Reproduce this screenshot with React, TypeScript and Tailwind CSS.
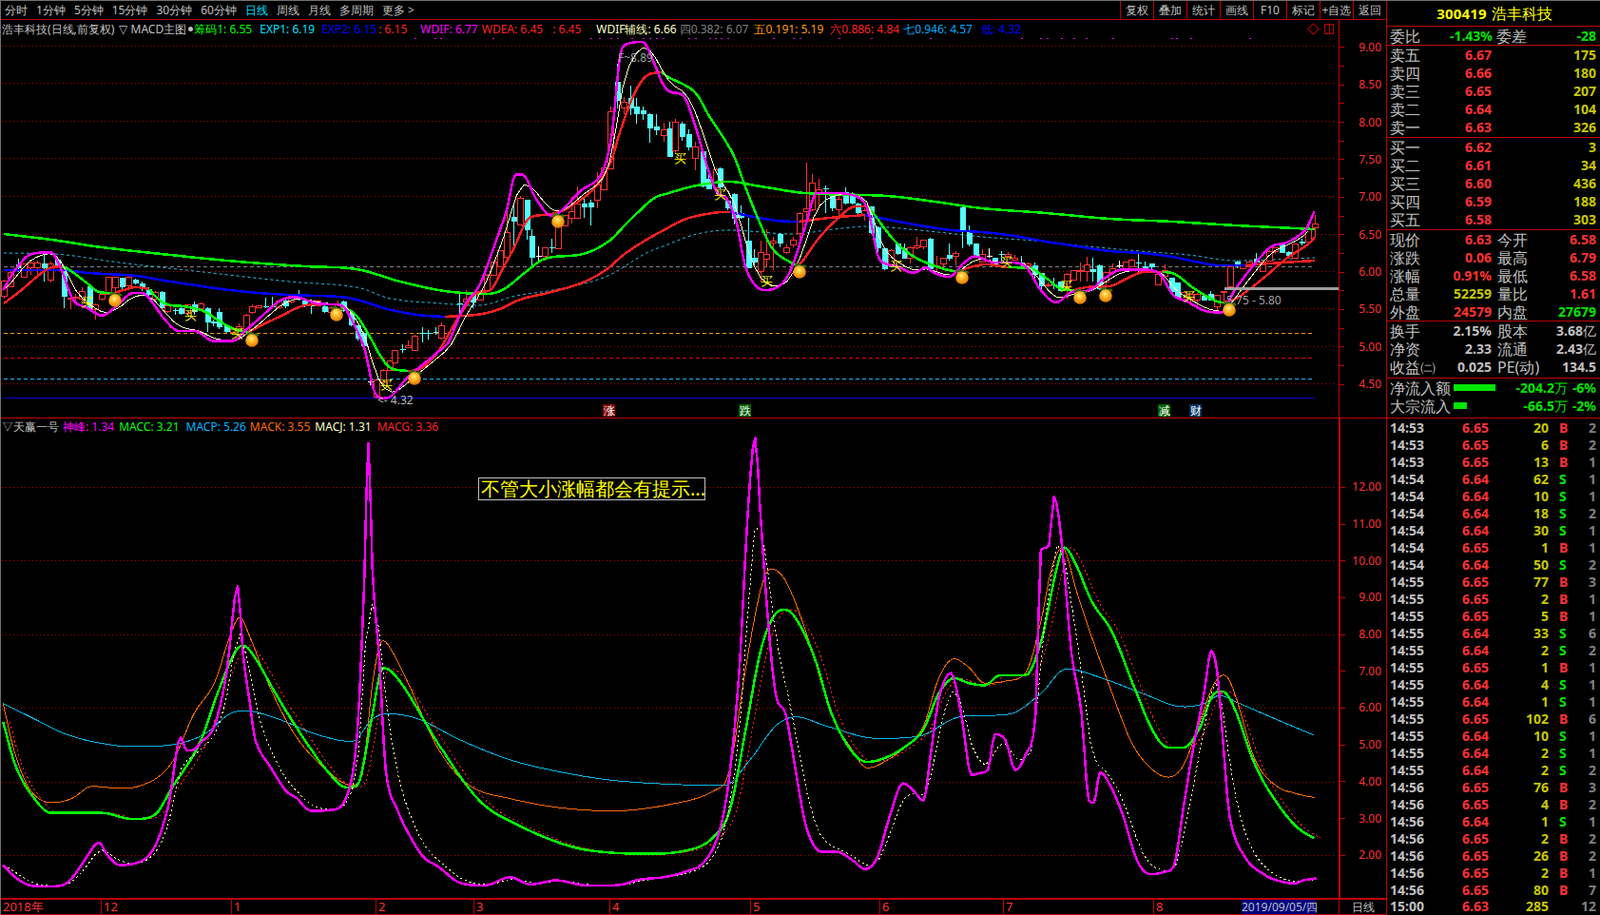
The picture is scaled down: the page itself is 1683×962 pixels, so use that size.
import React from "react";

type P = [number, number];
const K = 1683 / 1568;
const KY = 962 / 896;
const disp = (a: number[][]): P[] => a.map(([x, y]) => [x * K, y * KY]);
const str = (p: P[]) => p.map(([x, y]) => `${x.toFixed(1)},${y.toFixed(1)}`).join(" ");

function smooth(p: P[], step = 3): P[] {
  const n = p.length;
  if (n < 3) return p;
  const m: number[] = p.map((_, i) => {
    if (i === 0 || i === n - 1) return 0;
    const d0 = (p[i][1] - p[i - 1][1]) / (p[i][0] - p[i - 1][0] || 1);
    const d1 = (p[i + 1][1] - p[i][1]) / (p[i + 1][0] - p[i][0] || 1);
    if (d0 * d1 <= 0) return 0;
    const s = (p[i + 1][1] - p[i - 1][1]) / (p[i + 1][0] - p[i - 1][0] || 1);
    const lim = 3 * Math.min(Math.abs(d0), Math.abs(d1));
    return Math.sign(s) * Math.min(Math.abs(s), lim);
  });
  m[0] = (p[1][1] - p[0][1]) / (p[1][0] - p[0][0] || 1);
  m[n - 1] = (p[n - 1][1] - p[n - 2][1]) / (p[n - 1][0] - p[n - 2][0] || 1);
  const out: P[] = [];
  for (let i = 0; i < n - 1; i++) {
    const [x0, y0] = p[i];
    const [x1, y1] = p[i + 1];
    const h = x1 - x0 || 1;
    const segs = Math.max(1, Math.ceil(h / step));
    for (let s = 0; s < segs; s++) {
      const t = s / segs;
      const t2 = t * t;
      const t3 = t2 * t;
      const y = (2 * t3 - 3 * t2 + 1) * y0 + (t3 - 2 * t2 + t) * h * m[i] + (-2 * t3 + 3 * t2) * y1 + (t3 - t2) * h * m[i + 1];
      out.push([x0 + h * t, y]);
    }
  }
  out.push(p[n - 1]);
  return out;
}

function ema(p: P[], alpha: number, step = 6.933): P[] {
  const out: P[] = [];
  let j = 0;
  let v = p[0][1];
  for (let x = p[0][0]; x <= p[p.length - 1][0]; x += step) {
    while (j < p.length - 2 && p[j + 1][0] < x) j++;
    const [x0, y0] = p[j];
    const [x1, y1] = p[j + 1];
    const y = y0 + ((y1 - y0) * (x - x0)) / (x1 - x0 || 1);
    v = v + (y - v) * alpha;
    out.push([x, v]);
  }
  return out;
}

const RED = "#ff2020";
const GRN = "#00ff00";
const BLU = "#0000ff";

/* ---------- upper chart lines (page px) ---------- */
const exp1: [string, P[]][] = [
  [RED, [[4, 320], [20, 308], [40, 291], [54, 282], [65, 281]]],
  [GRN, [[65, 281], [72, 284], [92, 299], [104, 308], [114, 309], [118, 310]]],
  [RED, [[118, 310], [130, 306], [143, 303], [157, 305]]],
  [GRN, [[157, 305], [168, 317], [180, 322], [193, 323], [214, 328], [230, 338], [246, 347], [261, 350]]],
  [RED, [[261, 350], [271, 345], [296, 333], [321, 322], [340, 321], [357, 321]]],
  [GRN, [[357, 321], [375, 333], [389, 355], [400, 375], [411, 388], [429, 391]]],
  [RED, [[429, 391], [439, 390], [460, 372], [479, 340], [500, 310], [517, 305], [529, 283], [540, 263], [557, 230], [580, 226], [597, 220], [627, 197], [643, 170], [652, 140], [667, 100], [681, 80], [696, 77]]],
  [GRN, [[696, 77], [703, 82], [731, 98], [746, 123], [771, 163], [785, 200], [797, 230], [813, 263], [837, 280]]],
  [RED, [[837, 280], [843, 277], [860, 253], [880, 232], [900, 218], [913, 218]]],
  [GRN, [[913, 218], [920, 227], [940, 253], [960, 270], [987, 282], [1007, 287]]],
  [RED, [[1007, 287], [1017, 283], [1037, 279], [1060, 282]]],
  [GRN, [[1060, 282], [1083, 283], [1100, 293], [1117, 305], [1130, 306]]],
  [RED, [[1130, 306], [1143, 303], [1167, 302], [1187, 293], [1203, 287], [1223, 287]]],
  [GRN, [[1223, 287], [1233, 288], [1257, 305], [1280, 318], [1287, 319]]],
  [RED, [[1287, 319], [1300, 315], [1327, 295], [1353, 273], [1377, 257], [1383, 250]]],
];
const exp2: [string, P[]][] = [
  [BLU, [[4, 285], [64, 285], [93, 288], [143, 291], [179, 297], [250, 307], [304, 311], [357, 313], [379, 317], [404, 325], [439, 332], [468, 334]]],
  [RED, [[468, 334], [500, 332], [523, 327], [547, 316], [580, 308], [613, 298], [637, 285], [657, 268], [680, 253], [700, 242], [717, 233], [733, 228], [763, 224], [768, 224]]],
  [BLU, [[768, 224], [783, 227], [817, 233], [840, 234]]],
  [RED, [[840, 234], [873, 230], [910, 227]]],
  [BLU, [[910, 227], [940, 233], [967, 238], [1000, 243], [1033, 245], [1067, 249], [1100, 255], [1133, 260], [1167, 265], [1200, 267], [1233, 271], [1267, 278], [1283, 280], [1310, 280]]],
  [RED, [[1310, 280], [1350, 277], [1383, 275]]],
];
const longGreen: P[] = [[4, 247], [54, 253], [107, 261], [179, 269], [250, 276], [321, 281], [375, 284], [421, 297], [468, 307], [513, 310], [530, 305], [553, 287], [573, 273], [613, 268], [640, 255], [660, 235], [687, 210], [700, 205], [733, 196], [767, 192], [800, 197], [847, 204], [933, 207], [983, 213], [1033, 220], [1100, 225], [1167, 231], [1233, 234], [1300, 238], [1383, 242]];
const cyanDash: P[] = [[4, 267], [57, 268], [125, 277], [214, 287], [304, 297], [375, 303], [411, 315], [464, 320], [503, 322], [543, 312], [587, 305], [637, 292], [680, 267], [700, 259], [733, 247], [767, 243], [833, 247], [877, 242], [913, 239], [967, 243], [1033, 250], [1100, 255], [1133, 259], [1200, 265], [1250, 269], [1300, 275], [1383, 272]];
const wdif: P[] = smooth(disp([[3, 285], [15, 265], [30, 250], [50, 248], [60, 265], [72, 295], [85, 302], [100, 310], [115, 300], [130, 288], [140, 288], [150, 298], [160, 312], [175, 325], [190, 325], [210, 335], [228, 335], [240, 325], [255, 312], [275, 295], [290, 292], [310, 298], [335, 300], [345, 315], [358, 345], [366, 382], [375, 391], [383, 389], [400, 370], [430, 345], [440, 335], [455, 300], [470, 280], [485, 240], [497, 205], [505, 172], [512, 172], [525, 195], [540, 212], [570, 187], [590, 170], [600, 130], [607, 60], [612, 45], [630, 42], [640, 60], [648, 80], [655, 90], [670, 95], [680, 120], [695, 170], [703, 190], [712, 195], [722, 220], [730, 260], [740, 280], [750, 285], [765, 280], [775, 265], [790, 220], [800, 190], [815, 190], [835, 192], [850, 205], [862, 255], [880, 262], [895, 268], [908, 263], [915, 268], [930, 272], [945, 258], [955, 252], [975, 258], [990, 258], [1005, 262], [1020, 285], [1035, 297], [1050, 287], [1068, 285], [1080, 275], [1100, 265], [1120, 265], [1135, 268], [1150, 290], [1165, 297], [1180, 305], [1197, 307], [1210, 285], [1225, 265], [1245, 243], [1262, 238], [1280, 225], [1288, 208]]));

/* ---------- candles: [zoomX, kind, high, top, bottom, low] ---------- */
type C = [number, string, number, number, number, number];
const mapC = (a: C[], ox: number, sx: number, oy: number) =>
  a.map(([x, k, h, t, b, l]) => ({ x: ox + x / sx, k, h: oy + h / 3, t: oy + t / 3, b: oy + b / 3, l: oy + l / 3 }));
const candles = [
  ...mapC([
    [12, "r", 285, 290, 338, 345], [32, "r", 255, 262, 308, 308], [52, "c", 218, 238, 250, 262], [71, "r", 235, 236, 278, 280],
    [90, "r", 228, 232, 246, 270], [108, "r", 225, 233, 246, 272], [128, "c", 205, 235, 250, 292], [147, "r", 228, 235, 285, 295],
    [167, "c", 215, 222, 240, 250], [187, "c", 245, 255, 340, 375], [206, "r", 335, 342, 346, 378], [222, "r", 330, 340, 344, 350],
    [242, "r", 310, 322, 345, 360], [262, "c", 300, 305, 380, 382], [281, "r", 360, 365, 380, 410], [300, "r", 320, 332, 346, 352],
    [320, "r", 277, 277, 330, 332], [340, "r", 275, 277, 310, 320], [358, "c", 278, 280, 310, 325], [377, "r", 276, 278, 305, 310],
    [397, "c", 282, 286, 296, 300], [416, "c", 292, 296, 316, 320], [436, "c", 310, 315, 332, 342], [455, "r", 320, 326, 346, 350],
    [475, "c", 322, 325, 375, 378], [494, "r", 365, 368, 386, 390], [514, "c", 375, 380, 383, 395], [533, "c", 370, 375, 392, 396],
    [552, "r", 362, 365, 392, 396], [570, "c", 355, 362, 388, 396], [590, "r", 358, 362, 376, 380], [609, "c", 372, 375, 420, 450],
    [628, "c", 410, 416, 424, 432], [645, "c", 375, 386, 436, 440], [665, "c", 428, 430, 450, 452], [685, "r", 436, 441, 450, 456],
    [704, "r", 424, 432, 456, 460], [724, "r", 394, 396, 456, 458], [743, "r", 364, 370, 388, 392], [762, "r", 366, 368, 372, 374],
    [781, "c", 342, 368, 373, 375], [800, "c", 340, 368, 373, 375], [820, "r", 350, 352, 373, 376], [840, "c", 340, 350, 368, 376],
    [858, "r", 333, 337, 356, 360], [878, "c", 318, 340, 348, 352], [897, "c", 348, 352, 365, 372], [916, "c", 360, 366, 370, 392],
    [935, "r", 348, 352, 366, 370], [955, "c", 366, 370, 386, 390], [974, "r", 368, 372, 388, 390], [994, "r", 350, 360, 376, 380],
    [1012, "c", 352, 355, 385, 388], [1032, "c", 388, 390, 430, 432], [1052, "c", 428, 430, 470, 476], [1070, "c", 450, 452, 496, 498],
    [1089, "w", 596, 605, 607, 618], [1108, "r", 600, 602, 656, 660], [1128, "r", 568, 570, 606, 610], [1147, "r", 538, 540, 570, 572],
    [1163, "r", 506, 508, 546, 548], [1183, "c", 490, 505, 507, 516], [1202, "r", 476, 492, 500, 502], [1222, "r", 460, 463, 508, 510],
    [1242, "c", 435, 452, 455, 482], [1261, "c", 444, 452, 455, 474], [1281, "c", 435, 449, 452, 460], [1300, "r", 420, 431, 470, 474],
  ], 0, 2.8, 200),
  ...mapC([
    [10, "c", 510, 540, 543, 575], [31, "r", 498, 526, 534, 545], [52, "c", 505, 514, 536, 556], [74, "r", 500, 506, 528, 530],
    [95, "r", 448, 450, 500, 502], [116, "r", 408, 410, 450, 452], [137, "r", 371, 373, 423, 425], [158, "r", 228, 315, 395, 405],
    [179, "c", 230, 268, 282, 375], [200, "r", 200, 208, 293, 295], [221, "c", 212, 213, 310, 340], [238, "c", 305, 328, 395, 425],
    [259, "w", 360, 390, 392, 415], [280, "r", 362, 364, 390, 404], [301, "c", 335, 363, 366, 380], [322, "r", 293, 295, 368, 370],
    [343, "r", 260, 262, 296, 298], [364, "r", 205, 250, 270, 288], [382, "r", 170, 225, 272, 274], [403, "c", 210, 225, 237, 270],
    [424, "c", 213, 222, 237, 293], [445, "r", 125, 165, 215, 240], [466, "r", 100, 112, 180, 182],
  ], 480, 3, 140),
  ...mapC([
    [230, "r", 340, 355, 535, 537], [250, "c", 205, 262, 320, 345], [268, "r", 310, 325, 342, 362], [287, "c", 273, 312, 345, 365],
    [306, "c", 312, 340, 362, 392], [325, "c", 340, 351, 363, 380], [345, "c", 360, 363, 407, 452], [365, "c", 364, 402, 414, 430],
    [385, "r", 390, 412, 431, 450], [402, "c", 388, 408, 497, 499], [420, "r", 378, 388, 478, 490], [440, "c", 388, 394, 434, 448],
    [460, "c", 410, 426, 468, 478], [480, "r", 450, 466, 502, 540], [500, "c", 478, 480, 590, 595], [519, "c", 555, 568, 600, 600],
    [539, "r", 530, 538, 594, 598],
  ], 560, 2.8, 0),
  ...mapC([
    [172, "c", 232, 234, 294, 300], [196, "c", 330, 335, 360, 365], [217, "c", 312, 315, 393, 410], [238, "c", 350, 375, 390, 392],
    [260, "c", 390, 462, 548, 550], [280, "c", 490, 515, 530, 545], [301, "r", 462, 500, 560, 590], [319, "r", 425, 505, 521, 545],
    [340, "r", 450, 463, 470, 555], [361, "c", 438, 440, 472, 483], [382, "r", 473, 485, 498, 503], [403, "r", 450, 460, 476, 482],
    [424, "r", 372, 377, 438, 458], [445, "r", 216, 362, 370, 388], [463, "r", 252, 280, 365, 368], [484, "r", 267, 300, 312, 360],
    [505, "c", 288, 297, 300, 375], [526, "c", 315, 322, 360, 370], [547, "r", 312, 330, 365, 385], [568, "c", 295, 310, 345, 348],
    [589, "c", 310, 320, 345, 348], [607, "c", 343, 345, 375, 385], [628, "r", 360, 368, 382, 398], [649, "c", 353, 355, 438, 440],
    [670, "c", 418, 420, 487, 505], [691, "c", 483, 485, 552, 554], [712, "r", 490, 492, 540, 542], [733, "c", 468, 470, 505, 507],
    [752, "c", 470, 487, 518, 520], [772, "r", 481, 483, 518, 535], [793, "r", 450, 478, 485, 490], [814, "r", 458, 460, 480, 490],
    [835, "c", 454, 456, 552, 554], [856, "r", 510, 540, 545, 560], [877, "r", 515, 517, 535, 545], [895, "c", 470, 507, 520, 525],
    [916, "r", 495, 503, 512, 540], [937, "c", 356, 358, 432, 485], [958, "c", 415, 432, 473, 480], [979, "c", 470, 472, 510, 512],
    [1000, "r", 490, 505, 530, 532], [1020, "w", 487, 509, 511, 517], [1039, "c", 515, 517, 540, 542], [1060, "c", 495, 505, 507, 530],
    [1081, "r", 498, 505, 510, 517], [1102, "r", 507, 517, 523, 525], [1123, "c", 510, 530, 532, 545], [1144, "r", 530, 535, 542, 545],
    [1165, "c", 530, 540, 570, 585], [1186, "c", 563, 565, 605, 620],
  ], 700, 3, 100),
  ...mapC([
    [5, "r", 295, 300, 303, 310], [25, "c", 280, 300, 302, 315], [46, "c", 290, 292, 320, 322], [67, "r", 265, 267, 310, 345],
    [88, "r", 255, 257, 285, 287], [109, "r", 230, 255, 260, 290], [128, "r", 212, 237, 260, 290], [148, "c", 215, 252, 262, 290],
    [169, "c", 238, 240, 315, 317], [190, "r", 260, 262, 292, 310], [211, "r", 235, 250, 263, 270], [232, "w", 225, 240, 242, 250],
    [253, "r", 228, 230, 250, 252], [271, "r", 220, 222, 245, 247], [292, "c", 200, 230, 235, 260], [313, "c", 228, 242, 248, 252],
    [334, "c", 233, 235, 247, 260], [355, "r", 265, 267, 302, 304], [376, "r", 238, 255, 275, 277], [397, "c", 278, 280, 325, 327],
    [415, "c", 293, 295, 345, 347], [436, "r", 323, 325, 345, 347], [457, "r", 328, 330, 345, 365], [478, "r", 328, 330, 348, 370],
    [499, "c", 333, 335, 350, 352], [520, "c", 320, 330, 350, 352], [541, "r", 333, 335, 370, 385], [560, "r", 320, 321, 322, 360],
    [581, "r", 243, 245, 308, 310], [602, "c", 226, 228, 238, 248], [622, "r", 238, 240, 250, 252], [643, "r", 226, 228, 245, 247],
    [664, "c", 200, 218, 232, 234], [685, "r", 226, 228, 258, 260], [706, "r", 193, 195, 225, 227], [724, "r", 183, 185, 195, 205],
    [745, "c", 173, 175, 200, 202], [766, "c", 196, 198, 210, 212], [787, "r", 170, 172, 218, 220], [808, "c", 155, 165, 172, 178],
    [829, "r", 123, 125, 165, 167], [848, "r", 80, 110, 122, 150],
  ], 1100, 3, 200),
];

const buys: P[] = [[91, 318], [200, 332], [249, 351], [406, 405], [715, 167], [757, 205], [806, 296], [942, 280], [1058, 276], [1121, 301], [1250, 312]];
const balls: P[] = [[121, 317], [265, 359], [354, 332], [436, 399], [587, 234], [841, 287], [1012, 293], [1136, 314], [1163, 312], [1293, 327]];
const dots = [
  ...[1220, 1280, 1296, 1450].map((z) => z / 2.8),
  ...[172, 197, 230, 250, 290, 325, 345, 365, 383, 460, 480, 520, 537, 555, 573, 708, 768, 787, 902, 997, 1170, 1440, 1495, 1515, 1557].map((z) => 560 + z / 2.8),
  ...[25, 60, 138, 312, 327, 368, 540].map((z) => 1120 + z / 2.785),
];

/* ---------- lower chart lines ---------- */
const shen = smooth(disp([[3, 848], [15, 860], [30, 868], [50, 869], [65, 866], [75, 855], [85, 840], [97, 826], [105, 838], [117, 848], [130, 847], [150, 833], [165, 790], [177, 723], [183, 736], [190, 735], [197, 728], [210, 712], [222, 660], [233, 575], [238, 640], [245, 690], [250, 725], [265, 752], [280, 775], [290, 782], [305, 795], [325, 794], [340, 780], [350, 720], [357, 570], [361, 435], [365, 560], [372, 650], [378, 755], [390, 795], [402, 820], [415, 840], [430, 850], [450, 865], [475, 868], [500, 860], [520, 867], [545, 863], [575, 868], [595, 868], [610, 867], [628, 862], [650, 860], [670, 855], [690, 845], [705, 815], [715, 760], [725, 650], [733, 500], [740, 430], [745, 500], [752, 600], [760, 680], [770, 700], [778, 745], [790, 810], [805, 835], [820, 835], [835, 843], [848, 852], [860, 840], [872, 800], [885, 768], [895, 775], [905, 785], [912, 740], [920, 685], [932, 660], [942, 700], [952, 760], [960, 758], [968, 755], [975, 720], [985, 725], [995, 755], [1005, 740], [1015, 700], [1020, 540], [1028, 535], [1033, 487], [1038, 510], [1043, 560], [1050, 640], [1060, 700], [1067, 785], [1072, 787], [1078, 757], [1088, 770], [1100, 798], [1115, 845], [1128, 857], [1140, 855], [1150, 850], [1160, 790], [1170, 730], [1180, 680], [1187, 638], [1193, 660], [1198, 720], [1205, 800], [1220, 840], [1240, 858], [1255, 864], [1270, 866], [1277, 863], [1290, 861]]));
const macc = smooth(disp([[3, 708], [15, 750], [30, 778], [50, 797], [70, 797], [100, 797], [130, 803], [150, 800], [170, 770], [195, 730], [215, 675], [230, 640], [238, 633], [250, 645], [270, 680], [295, 720], [320, 755], [340, 772], [350, 770], [365, 700], [375, 655], [385, 660], [400, 680], [430, 730], [470, 785], [510, 810], [560, 830], [600, 836], [640, 837], [680, 832], [700, 820], [715, 795], [730, 720], [745, 640], [760, 602], [770, 598], [785, 615], [800, 650], [815, 700], [835, 737], [850, 747], [870, 742], [890, 730], [905, 715], [920, 680], [935, 665], [950, 670], [965, 672], [980, 662], [1005, 662], [1020, 630], [1035, 560], [1043, 537], [1055, 555], [1070, 590], [1090, 620], [1110, 670], [1130, 717], [1145, 733], [1160, 733], [1175, 715], [1190, 680], [1198, 678], [1210, 695], [1230, 750], [1250, 785], [1270, 810], [1288, 822]]));
const mack = smooth(disp([[3, 690], [15, 740], [30, 775], [50, 787], [70, 783], [90, 771], [120, 773], [150, 765], [170, 745], [190, 700], [210, 670], [225, 625], [235, 605], [245, 625], [265, 675], [290, 722], [320, 755], [345, 770], [355, 760], [365, 670], [375, 628], [385, 640], [400, 670], [430, 735], [460, 770], [500, 783], [550, 792], [600, 795], [660, 788], [700, 775], [715, 755], [730, 660], [745, 580], [755, 558], [770, 570], [790, 620], [815, 700], [835, 735], [850, 753], [870, 745], [890, 730], [905, 712], [920, 665], [935, 646], [950, 655], [965, 670], [985, 668], [1005, 660], [1020, 610], [1030, 560], [1041, 537], [1055, 580], [1070, 625], [1090, 680], [1110, 730], [1130, 755], [1145, 762], [1160, 750], [1175, 710], [1190, 670], [1200, 662], [1210, 680], [1230, 745], [1250, 770], [1270, 778], [1288, 782]]));
const macp = smooth(disp([[3, 690], [30, 703], [60, 718], [90, 727], [130, 732], [170, 730], [200, 720], [225, 700], [240, 697], [270, 704], [310, 720], [345, 727], [365, 705], [380, 700], [410, 705], [450, 725], [500, 745], [550, 757], [600, 765], [660, 769], [710, 770], [735, 745], [760, 712], [780, 703], [810, 712], [860, 724], [900, 722], [940, 703], [990, 700], [1020, 680], [1045, 656], [1080, 665], [1120, 680], [1160, 693], [1180, 690], [1195, 682], [1215, 690], [1250, 705], [1288, 721]]));

/* ---------- right panel data ---------- */
const sell = [["卖五", "6.67", "175"], ["卖四", "6.66", "180"], ["卖三", "6.65", "207"], ["卖二", "6.64", "104"], ["卖一", "6.63", "326"]];
const buy = [["买一", "6.62", "3"], ["买二", "6.61", "34"], ["买三", "6.60", "436"], ["买四", "6.59", "188"], ["买五", "6.58", "303"]];
const R = "text-[#ff3232]";
const Y = "text-[#c8c800]";
const G = "text-[#00e600]";
const W = "text-[#c0c0c0]";
const stats = [
  ["现价", "6.63", R, "今开", "6.58", R],
  ["涨跌", "0.06", R, "最高", "6.79", R],
  ["涨幅", "0.91%", R, "最低", "6.58", R],
  ["总量", "52259", Y, "量比", "1.61", R],
  ["外盘", "24579", R, "内盘", "27679", G],
];
const stats2 = [
  ["换手", "2.15%", W, "股本", "3.68亿", W],
  ["净资", "2.33", W, "流通", "2.43亿", W],
  ["收益㈡", "0.025", W, "PE(动)", "134.5", W],
];
const ticks: [string, string, string, string, string][] = [
  ["14:53", "6.65", "20", "B", "2"], ["14:53", "6.65", "6", "B", "2"], ["14:53", "6.65", "13", "B", "1"],
  ["14:54", "6.64", "62", "S", "1"], ["14:54", "6.64", "10", "S", "1"], ["14:54", "6.64", "18", "S", "2"],
  ["14:54", "6.64", "30", "S", "1"], ["14:54", "6.65", "1", "B", "1"], ["14:54", "6.64", "50", "S", "2"],
  ["14:55", "6.65", "77", "B", "3"], ["14:55", "6.65", "2", "B", "1"], ["14:55", "6.65", "5", "B", "1"],
  ["14:55", "6.64", "33", "S", "6"], ["14:55", "6.64", "2", "S", "2"], ["14:55", "6.65", "1", "B", "1"],
  ["14:55", "6.64", "4", "S", "1"], ["14:55", "6.64", "1", "S", "1"], ["14:55", "6.65", "102", "B", "6"],
  ["14:55", "6.64", "10", "S", "1"], ["14:55", "6.64", "2", "S", "1"], ["14:55", "6.64", "2", "S", "2"],
  ["14:56", "6.65", "76", "B", "3"], ["14:56", "6.65", "4", "B", "2"], ["14:56", "6.64", "1", "S", "1"],
  ["14:56", "6.65", "2", "B", "2"], ["14:56", "6.65", "26", "B", "2"], ["14:56", "6.65", "2", "B", "1"],
  ["14:56", "6.65", "80", "B", "7"], ["15:00", "6.63", "285", "", "12"],
];
const tabs = ["分时", "1分钟", "5分钟", "15分钟", "30分钟", "60分钟", "日线", "周线", "月线", "多周期", "更多 >"];
const tools = ["复权", "叠加", "统计", "画线", "F10", "标记", "+自选", "返回"];
const upperAxis = ["9.00", "", "8.50", "", "8.00", "", "7.50", "", "7.00", "", "6.50", "", "6.00", "", "5.50", "", "5.00", "", "4.50"];
const lowerAxis = ["12.00", "11.00", "10.00", "9.00", "8.00", "7.00", "6.00", "5.00", "4.00", "3.00", "2.00"];
const months: [string, string][] = [["2018年", "w-[105px]"], ["12", "w-[137px]"], ["1", "w-[152px]"], ["2", "w-[103px]"], ["3", "w-[143px]"], ["4", "w-[148px]"], ["5", "w-[136px]"], ["6", "w-[130px]"], ["7", "w-[158px]"], ["8", "w-[93px]"]];

const Line = ({ p, c, w = 2.5, dash }: { p: P[]; c: string; w?: number; dash?: string }) => (
  <polyline points={str(p)} fill="none" stroke={c} strokeWidth={w} strokeDasharray={dash} strokeLinejoin="round" shapeRendering="crispEdges" />
);

const Dotted = ({ y, x2 = 1405 }: { y: number; x2?: number }) => (
  <line x1={2} x2={x2} y1={y + 0.5} y2={y + 0.5} stroke="#b00000" strokeDasharray="1 3" />
);

const Special = ({ y, c }: { y: number; c: string }) => (
  <line x1={4} x2={1383} y1={y + 0.5} y2={y + 0.5} stroke={c} strokeDasharray="4 3" />
);

function Badge({ x, t, bg }: { x: number; t: string; bg: string }) {
  return (
    <g>
      <rect x={x} y={426} width={13} height={13} fill={bg} />
      <text x={x + 6.5} y={437} fontSize={12} fill="#fff" textAnchor="middle">{t}</text>
    </g>
  );
}

function Ball({ x, y }: { x: number; y: number }) {
  return (
    <g>
      <path d={`M${x - 7} ${y - 6}q5 -6 9 -1q-4 3 -9 1zM${x + 1} ${y - 6}q4 -4 7 1q-3 1 -7 -1z`} fill="#3c6a10" />
      <circle cx={x} cy={y} r={6.8} fill="url(#ball)" />
    </g>
  );
}

function UpperChart() {
  return (
    <svg width={1407} height={399} viewBox="1 41 1407 399" className="block">
      <defs>
        <radialGradient id="ball" cx="45%" cy="35%" r="70%">
          <stop offset="0%" stopColor="#fff080" />
          <stop offset="45%" stopColor="#ffb020" />
          <stop offset="100%" stopColor="#d87000" />
        </radialGradient>
      </defs>
      {[49, 88, 128, 167, 207, 247, 286, 325, 365, 404].map((y) => <Dotted key={y} y={y} />)}
      <Special y={281} c="#808080" />
      <Special y={351} c="#ff9900" />
      <Special y={377} c="#e00000" />
      <Special y={399} c="#20b8ff" />
      <line x1={4} x2={1383} y1={419.5} y2={419.5} stroke="#0000c8" />
      {dots.map((x, i) => <rect key={i} x={Math.round(x)} y={40} width={2} height={2} fill="#ff00ff" />)}
      <polyline points={str(smooth(cyanDash))} fill="none" stroke="#20c8f0" strokeDasharray="3 3" />
      {candles.map((c, i) => {
        const color = c.k === "r" ? "#ff3232" : c.k === "w" ? "#ffffff" : "#54ffff";
        const x = Math.round(c.x);
        return (
          <g key={i} shapeRendering="crispEdges">
            <line x1={x + 0.5} x2={x + 0.5} y1={c.h} y2={c.l} stroke={color} />
            {c.k === "r" ? (
              <rect x={x - 2.5} y={c.t} width={6} height={Math.max(c.b - c.t, 1)} fill="#000" stroke={color} />
            ) : (
              <rect x={x - 2.5} y={c.t} width={6} height={Math.max(c.b - c.t, 1)} fill={color} />
            )}
          </g>
        );
      })}
      <Line p={smooth(longGreen)} c={GRN} />
      {exp2.map(([c, p], i) => <Line key={i} p={smooth(p)} c={c} />)}
      {exp1.map(([c, p], i) => <Line key={i} p={smooth(p)} c={c} />)}
      <Line p={ema(wdif, 0.5)} c="#ffffc0" w={1} />
      <Line p={wdif} c="#ff00ff" />
      {buys.map(([x, y], i) => (
        <text key={i} x={x} y={y + 5} fontSize={13} fill="#ffff00" textAnchor="middle">买</text>
      ))}
      <rect x={1288} y={303} width={120} height={3} fill="#a0a0a0" />
      <text x={1290} y={321} fontSize={12} fill="#a0a0a0">5.75 - 5.80</text>
      <text x={650} y={66} fontSize={12} fill="#a0a0a0">F~8.89</text>
      <text x={397} y={426} fontSize={12} fill="#b8b8b8">&lt;- 4.32</text>
      {balls.map(([x, y], i) => <Ball key={i} x={x} y={y} />)}
      <Badge x={634} t="涨" bg="#800000" />
      <Badge x={777} t="跌" bg="#006000" />
      <Badge x={1218} t="减" bg="#006000" />
      <Badge x={1251} t="财" bg="#003060" />
    </svg>
  );
}

function LowerChart() {
  return (
    <svg width={1407} height={487} viewBox="1 458 1407 487" className="block">
      {[513, 590, 668, 745, 823, 900].map((y) => <Dotted key={y} y={y} />)}
      <Line p={macp} c="#00b8e8" w={1} />
      <Line p={mack} c="#ff6a00" w={1} />
      <polyline points={str(macc.map(([x, y]) => [x + 7, y] as P))} fill="none" stroke="#ff2020" strokeDasharray="2 3" shapeRendering="crispEdges" />
      <Line p={macc} c={GRN} />
      <polyline points={str(ema(shen, 0.48))} fill="none" stroke="#ffffb0" strokeDasharray="2 3" shapeRendering="crispEdges" />
      <Line p={shen} c="#ff00ff" />
    </svg>
  );
}

function Num({ t }: { t: string }) {
  const m = t.match(/^(.*)([万亿])$/);
  if (!m) return <>{t}</>;
  return (
    <>
      {m[1]}
      <span className="font-normal">{m[2]}</span>
    </>
  );
}

function Row5({ rows }: { rows: string[][] }) {
  return (
    <div className="border-b border-[#c00000] pb-[1px]">
      {rows.map(([a, b, c]) => (
        <div key={a} className="flex items-center h-[19px] pl-[3px] pr-[4px]">
          <span className="w-[32px] text-[16px] font-normal text-[#c0c0c0] whitespace-nowrap">{a}</span>
          <span className="w-[75px] text-right text-[#ff3232]">{b}</span>
          <span className="flex-1 text-right text-[#c8c800]">{c}</span>
        </div>
      ))}
    </div>
  );
}

function Stats({ rows, cls }: { rows: string[][]; cls: string }) {
  return (
    <div className={`border-b border-[#c00000] ${cls}`}>
      {rows.map((r) => (
        <div key={r[0]} className="flex items-center h-[19px] pl-[3px] pr-[4px]">
          <span className="w-[50px] text-[16px] font-normal text-[#c0c0c0] whitespace-nowrap">{r[0]}</span>
          <span className={`w-[57px] text-right ${r[2]}`}><Num t={r[1]} /></span>
          <span className="w-[48px] pl-[6px] text-[16px] font-normal text-[#c0c0c0] whitespace-nowrap">{r[3]}</span>
          <span className={`flex-1 text-right whitespace-nowrap ${r[5]}`}><Num t={r[4]} /></span>
        </div>
      ))}
    </div>
  );
}

function RightPanel() {
  return (
    <div className="w-[225px] h-full border-l border-[#c00000] text-[14px] font-bold shrink-0">
      <div className="h-[27px] border-b border-[#c00000] flex items-center justify-center gap-[5px] text-[#ffff00] pl-[2px]">
        <span className="text-[15px] tracking-[0.2px]">300419</span>
        <span className="text-[16px] font-normal">浩丰科技</span>
      </div>
      <div className="h-[20px] border-b border-[#c00000] flex items-center pl-[3px] pr-[4px]">
        <span className="w-[32px] text-[16px] font-normal text-[#c0c0c0] whitespace-nowrap">委比</span>
        <span className="w-[76px] text-right text-[#00e600]">-1.43%</span>
        <span className="pl-[4px] w-[40px] text-[16px] font-normal text-[#c0c0c0] whitespace-nowrap">委差</span>
        <span className="flex-1 text-right text-[#00e600]">-28</span>
      </div>
      <Row5 rows={sell} />
      <Row5 rows={buy} />
      <Stats rows={stats} cls="h-[96px]" />
      <Stats rows={stats2} cls="h-[60px]" />
      <div className="h-[42px] border-b border-[#c00000]">
        <div className="flex items-center h-[19px] pl-[3px] pr-[4px]">
          <span className="w-[67px] text-[16px] font-normal text-[#c0c0c0] whitespace-nowrap">净流入额</span>
          <span className="w-[44px] h-[7px] bg-[#00e600]" />
          <span className="w-[76px] text-right text-[#00e600] whitespace-nowrap"><Num t="-204.2万" /></span>
          <span className="flex-1 text-right text-[#00e600]">-6%</span>
        </div>
        <div className="flex items-center h-[19px] pl-[3px] pr-[4px]">
          <span className="w-[67px] text-[16px] font-normal text-[#c0c0c0] whitespace-nowrap">大宗流入</span>
          <span className="w-[14px] h-[7px] bg-[#00e600] mr-[30px]" />
          <span className="w-[76px] text-right text-[#00e600] whitespace-nowrap"><Num t="-66.5万" /></span>
          <span className="flex-1 text-right text-[#00e600]">-2%</span>
        </div>
      </div>
      {ticks.map((t, i) => (
        <div key={i} className="flex items-center h-[18px] last:h-[17px] pl-[3px] pr-[4px]">
          <span className="w-[60px] text-[#c0c0c0]">{t[0]}</span>
          <span className="w-[44px] text-right text-[#ff3232]">{t[1]}</span>
          <span className="w-[63px] text-right text-[#c8c800]">{t[2]}</span>
          <span className={`w-[24px] pl-[11px] ${t[3] === "B" ? "text-[#ff3232]" : "text-[#00e600]"}`}>{t[3]}</span>
          <span className="flex-1 text-right text-[#808080]">{t[4]}</span>
        </div>
      ))}
    </div>
  );
}

export default function App() {
  return (
    <div className="w-[1683px] h-[962px] overflow-hidden bg-black flex border-t border-l border-[#707070] font-['Liberation_Sans','Noto_Sans_CJK_SC',sans-serif] text-[12px] text-[#c0c0c0]">
      <div className="w-[1457px] flex flex-col shrink-0">
        <div className="h-[20px] flex items-center border-b border-[#c00000] box-content">
          <div className="flex items-center gap-[9px] pl-[4px] whitespace-nowrap">
            {tabs.map((t) => (
              <span key={t} className={t === "日线" ? "text-[#00e0ff]" : ""}>{t}</span>
            ))}
          </div>
          <div className="ml-auto flex h-full">
            {tools.map((t) => (
              <span key={t} className="w-[35px] border-l border-[#c00000] flex items-center justify-center whitespace-nowrap">{t}</span>
            ))}
          </div>
        </div>

        <div className="h-[418px] flex border-b border-[#c00000] box-content">
          <div className="w-[1407px] flex flex-col shrink-0">
            <div className="h-[19px] flex items-center whitespace-nowrap pl-[1px] shrink-0">
              <span>浩丰科技(日线,前复权)</span>
              <span className="ml-[5px]">▽ MACD主图</span>
              <span className="ml-[2px] w-[5px] h-[5px] rounded-full bg-[#c0c0c0]" />
              <span className="ml-[1px] text-[#00ff00]">筹码1: 6.55</span>
              <span className="ml-[8px] text-[#00e0ff]">EXP1: 6.19</span>
              <span className="ml-[7px] text-[#0000ff]">EXP2: 6.15</span>
              <span className="ml-[2px] text-[#ff2020]">: 6.15</span>
              <span className="ml-[14px] text-[#ff00ff]">WDIF: 6.77</span>
              <span className="ml-[4px] text-[#ff2020]">WDEA: 6.45</span>
              <span className="ml-[10px] text-[#ff2020]">: 6.45</span>
              <span className="ml-[16px] text-[#ffffc0]">WDIF辅线: 6.66</span>
              <span className="ml-[3px] text-[#808080]">四0.382: 6.07</span>
              <span className="ml-[6px] text-[#ff9900]">五0.191: 5.19</span>
              <span className="ml-[7px] text-[#ff2020]">六0.886: 4.84</span>
              <span className="ml-[4px] text-[#00aaff]">七0.946: 4.57</span>
              <span className="ml-[9px] text-[#0000ff]">低: 4.32</span>
              <span className="ml-auto w-[9px] h-[9px] rotate-45 border border-[#c00000]" />
              <span className="ml-[7px] mr-[5px] w-[10px] h-[11px] border border-[#c00000] flex justify-center">
                <span className="w-px h-full bg-[#c00000]" />
              </span>
            </div>
            <UpperChart />
          </div>
          <div className="w-[50px] border-l border-[#c00000] pt-[19px]">
            {upperAxis.map((t, i) => (
              <div key={i} className="h-[19.7px] flex items-center pr-[5px]">
                <span className="w-[5px] h-px bg-[#c00000]" />
                <span className="ml-auto text-[#ff3232]">{t}</span>
              </div>
            ))}
          </div>
        </div>

        <div className="h-[504px] flex border-b-2 border-[#c00000] box-content">
          <div className="w-[1407px] flex flex-col shrink-0 relative">
            <div className="h-[17px] flex items-center whitespace-nowrap pl-[1px] shrink-0">
              <span>▽天赢一号</span>
              <span className="ml-[4px] text-[#ff00ff]">神峰: 1.34</span>
              <span className="ml-[5px] text-[#00ff00]">MACC: 3.21</span>
              <span className="ml-[7px] text-[#00b8ff]">MACP: 5.26</span>
              <span className="ml-[4px] text-[#ff6a00]">MACK: 3.55</span>
              <span className="ml-[5px] text-[#ffffc0]">MACJ: 1.31</span>
              <span className="ml-[6px] text-[#ff2020]">MACG: 3.36</span>
            </div>
            <LowerChart />
            <div className="absolute left-[502px] top-[62px] w-[239px] h-[24px] border border-[#c0c0c0] bg-black text-[#ffff00] text-[20px] leading-[22px] whitespace-nowrap pl-[2px]">不管大小涨幅都会有提示...</div>
          </div>
          <div className="w-[50px] border-l-2 border-[#c00000] pt-[53px]">
            {lowerAxis.map((t) => (
              <div key={t} className="h-[38.7px] flex items-center pr-[5px]">
                <span className="w-[5px] h-px bg-[#c00000]" />
                <span className="ml-auto text-[#ff3232]">{t}</span>
              </div>
            ))}
          </div>
        </div>

        <div className="h-[15px] flex border-b border-[#c00000] box-content">
          <div className="w-[1407px] flex shrink-0">
            {months.map(([t, w]) => (
              <span key={t} className={`${w} border-l border-[#c00000] text-[#ff3232] text-[13px] pl-[2px] leading-[15px] first:border-l-0`}>{t}</span>
            ))}
            <span className="w-[78px] bg-[#000080] text-[#c0c0c0] leading-[15px] text-center whitespace-nowrap">2019/09/05/四</span>
          </div>
          <span className="w-[50px] border-l border-[#c00000] text-center leading-[15px]">日线</span>
        </div>
      </div>
      <RightPanel />
    </div>
  );
}
